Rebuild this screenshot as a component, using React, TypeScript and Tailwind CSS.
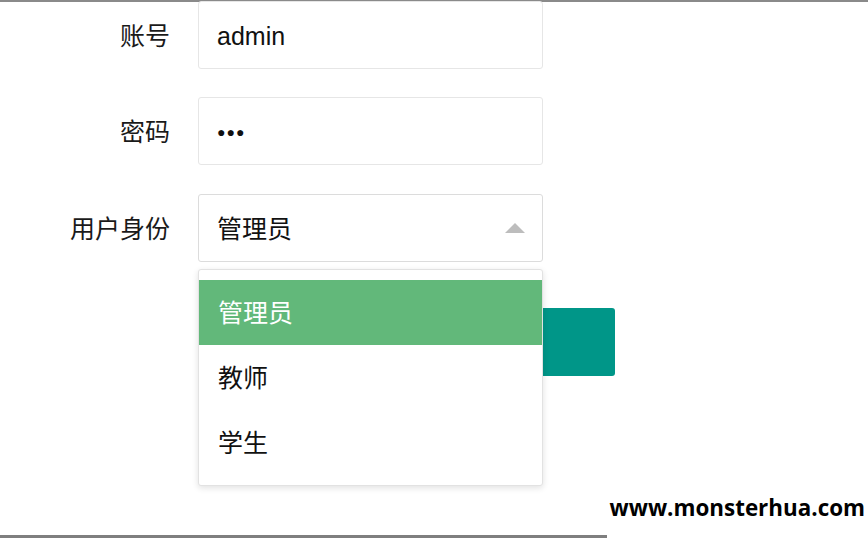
import { useState } from 'react'

const roles = ['管理员', '教师', '学生']

const font = { fontFamily: '"Liberation Sans", "Noto Sans CJK SC", sans-serif' }

function Row({ label, children, className = '' }: { label: string; children: React.ReactNode; className?: string }) {
  return (
    <div className={`flex items-center ${className}`}>
      <label className="w-[170px] pt-[4px] text-right text-[25px] text-[#1a1a1a]">{label}</label>
      <div className="ml-[28px] w-[345px]">{children}</div>
    </div>
  )
}

export default function App() {
  const [role] = useState(roles[0])

  return (
    <div className="relative h-[538px] w-[868px] overflow-hidden bg-white" style={font}>
      {/* top rule */}
      <div className="h-[2px] w-full bg-[#8a8a8a]" />

      <div className="flex flex-col">
        <Row label="账号" className="-mt-[1px]">
          <div className="flex h-[68px] items-center rounded-[3px] border border-[#e6e6e6] px-[18px] pt-[3px] text-[25px] text-[#111]">
            admin
          </div>
        </Row>

        <Row label="密码" className="mt-[28px]">
          <div className="flex h-[68px] items-center rounded-[3px] border border-[#e6e6e6] px-[18px] pt-[2px] text-[#111]">
            <span className="text-[14px] tracking-[1px]">●●●</span>
          </div>
        </Row>

        <Row label="用户身份" className="mt-[29px]">
          <div className="relative">
            <div className="flex h-[68px] items-center justify-between rounded-[3px] border border-[#dcdcdc] pl-[18px] pr-[17px] text-[25px] text-[#111]">
              <span className="pt-[3px]">{role}</span>
              <svg width="20" height="10" viewBox="0 0 20 10">
                <polygon points="10,0 20,10 0,10" fill="#bdbdbd" />
              </svg>
            </div>

            {/* open dropdown */}
            <div className="absolute left-0 top-[75px] z-10 w-[345px] rounded-[3px] border border-[#e2e2e2] bg-white py-[10px] shadow-[0_2px_6px_rgba(0,0,0,0.12)]">
              {roles.map((r) => (
                <div
                  key={r}
                  className={`flex h-[65px] items-center px-[19px] pt-[3px] text-[25px] ${
                    r === role ? 'bg-[#62b87a] text-white' : 'text-[#111]'
                  }`}
                >
                  {r}
                </div>
              ))}
            </div>
          </div>
        </Row>

        {/* login button, mostly hidden under the menu */}
        <div className="ml-[198px] mt-[46px] h-[68px] w-[417px] rounded-[3px] bg-[#009688]" />
      </div>

      {/* watermark */}
      <div
        className="absolute right-[3px] top-[491px] text-[22.4px] font-bold text-black"
        style={{ fontFamily: '"Open Sans", "DejaVu Sans", sans-serif' }}
      >
        www.monsterhua.com
      </div>

      {/* bottom rule */}
      <div className="absolute bottom-0 left-0 h-[3px] w-[607px] bg-[#7f7f7f]" />
    </div>
  )
}
